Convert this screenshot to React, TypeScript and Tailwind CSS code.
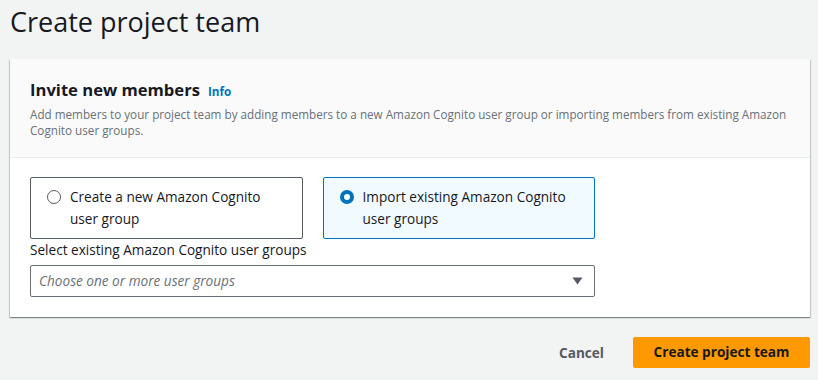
import { useState } from 'react';

const font = { fontFamily: '"Open Sans", "Noto Sans", Arial, sans-serif' };

function Radio({ checked }: { checked: boolean }) {
  return checked ? (
    <span className="mt-[4px] flex h-[14px] w-[14px] shrink-0 items-center justify-center rounded-full bg-[#0073bb]">
      <span className="h-[6px] w-[6px] rounded-full bg-white" />
    </span>
  ) : (
    <span className="mt-[4px] h-[14px] w-[14px] shrink-0 rounded-full border border-[#545b64] bg-white" />
  );
}

export default function App() {
  const [mode, setMode] = useState<'create' | 'import'>('import');

  const tiles = [
    { id: 'create' as const, label: 'Create a new Amazon Cognito user group' },
    { id: 'import' as const, label: 'Import existing Amazon Cognito user groups' },
  ];

  return (
    <div style={font} className="min-h-screen w-full bg-[#f2f3f3] px-[10px] pb-[12px] text-[#16191f]">
      <h1 className="pt-[4px] text-[27px] leading-[36px] font-normal">Create project team</h1>

      {/* Card */}
      <section className="mt-[19px] w-[800px] bg-white shadow-[0_1px_1px_0_rgba(0,28,36,0.3),1px_1px_1px_0_rgba(0,28,36,0.15),-1px_1px_1px_0_rgba(0,28,36,0.15)]">
        <div className="border-b border-[#eaeded] bg-[#fafafa] px-[20px] pt-[20px] pb-[19px]">
          <h2 className="flex items-baseline text-[16.6px] leading-[22px] font-bold">
            Invite new members
            <a className="ml-[8px] text-[11.7px] font-bold text-[#0073bb]">Info</a>
          </h2>
          <p className="mt-[4px] text-[11.7px] leading-[16px] text-[#687078]">
            Add members to your project team by adding members to a new Amazon Cognito user group or importing
            members from existing Amazon Cognito user groups.
          </p>
        </div>

        <div className="px-[20px] pt-[19px] pb-[20px]">
          <div className="w-[565px]">
            <div className="grid grid-cols-2 gap-[20px]">
              {tiles.map((t) => {
                const on = mode === t.id;
                return (
                  <button
                    key={t.id}
                    onClick={() => setMode(t.id)}
                    className={`flex gap-[9px] rounded-[2px] border py-[8px] pr-[15px] pl-[16px] text-left text-[13.6px] leading-[22px] ${
                      on ? 'border-[#0073bb] bg-[#f1faff]' : 'border-[#545b64] bg-white'
                    }`}
                  >
                    <Radio checked={on} />
                    <span>{t.label}</span>
                  </button>
                );
              })}
            </div>

            <label className="block text-[13.6px] leading-[22px]">
              Select existing Amazon Cognito user groups
            </label>
            <div className="mt-[4px] flex h-[32px] items-center justify-between rounded-[2px] border border-[#687078] bg-white pr-[11px] pl-[8px]">
              <span className="text-[13.6px] text-[#687078] italic">Choose one or more user groups</span>
              <svg width="11" height="8" viewBox="0 0 11 8">
                <path d="M0.5 0.5 H10.5 L5.5 7.5 Z" fill="#545b64" />
              </svg>
            </div>
          </div>
        </div>
      </section>

      {/* Footer actions */}
      <div className="mt-[20px] flex w-[800px] items-center justify-end gap-[9px]">
        <button className="px-[20px] text-[13.6px] leading-[22px] font-bold text-[#545b64]">Cancel</button>
        <button className="h-[31px] w-[177px] rounded-[2px] bg-[#ff9900] text-[13.6px] font-bold text-[#16191f]">
          Create project team
        </button>
      </div>
    </div>
  );
}
